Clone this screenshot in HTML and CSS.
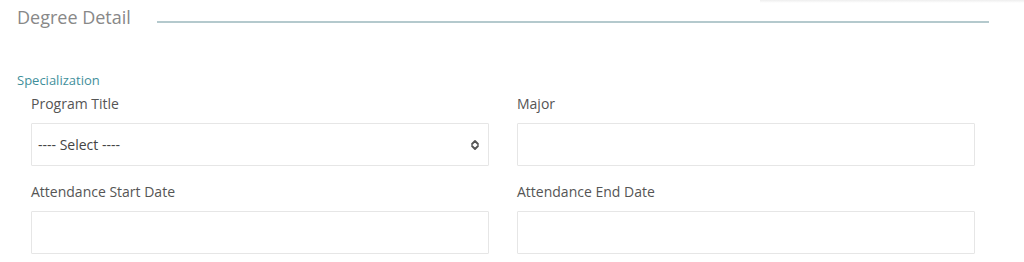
FILE: index.html
```html
<!DOCTYPE html>
<html lang="en">
<head>
    <meta charset="UTF-8">
    <meta name="viewport" content="width=device-width, initial-scale=1.0">
    <title>Degree Detail</title>
    <link rel="stylesheet" href="styles.css">
</head>
<body>
    <div class="menu-shadow"></div>
    <div class="section">
        <div class="section-header">
            <h2>Degree Detail</h2>
            <div class="rule"></div>
        </div>
        <div class="group-title">Specialization</div>
        <div class="form-grid">
            <div class="field">
                <label for="program">Program Title</label>
                <div class="select-box">
                    <select id="program">
                        <option>---- Select ----</option>
                    </select>
                    <svg class="chevron" width="10" height="12" viewBox="0 0 10 12">
                        <path d="M2 5 L5 2 L8 5 M2 7 L5 10 L8 7" fill="none" stroke="#555" stroke-width="1.8" stroke-linecap="round" stroke-linejoin="round"/>
                    </svg>
                </div>
            </div>
            <div class="field">
                <label for="major">Major</label>
                <input type="text" id="major">
            </div>
            <div class="field">
                <label for="startDate">Attendance Start Date</label>
                <input type="text" id="startDate">
            </div>
            <div class="field">
                <label for="endDate">Attendance End Date</label>
                <input type="text" id="endDate">
            </div>
        </div>
    </div>
</body>
</html>
```

FILE: styles.css
```css
body {
    margin: 0;
    background-color: #ffffff;
    font-family: "Open Sans", Arial, sans-serif;
    color: #555;
}

.menu-shadow {
    position: absolute;
    top: 0;
    left: 760px;
    width: 264px;
    height: 3px;
    background: linear-gradient(#eeeeee, #ffffff);
}

.section {
    padding: 6px 35px 0 17px;
}

.section-header {
    display: flex;
}

.section-header h2 {
    margin: 0;
    font-size: 18px;
    line-height: 22px;
    font-weight: normal;
    color: #888888;
}

.rule {
    flex: 1;
    height: 1.5px;
    margin: 15px 0 0 26px;
    background-color: #b4c9cd;
}

.group-title {
    margin-top: 44px;
    font-size: 13px;
    line-height: 17px;
    color: #3f8f9b;
}

.form-grid {
    display: grid;
    grid-template-columns: 458px 458px;
    column-gap: 28px;
    row-gap: 15px;
    margin: 4px 0 0 14px;
}

.field label {
    display: block;
    font-size: 14px;
    line-height: 19px;
    padding-top: 1px;
    margin-bottom: 10px;
    color: #555;
}

.field input,
.select-box {
    box-sizing: border-box;
    width: 100%;
    height: 43px;
    border: 1px solid #e6e6e6;
    border-radius: 1px;
    background-color: #fff;
}

.select-box {
    position: relative;
}

.select-box select {
    appearance: none;
    width: 100%;
    height: 100%;
    border: none;
    background: transparent;
    padding: 0 0 0 6px;
    font-family: "Open Sans", Arial, sans-serif;
    font-size: 14px;
    color: #444;
}

.chevron {
    position: absolute;
    right: 8px;
    top: 15px;
}
```
